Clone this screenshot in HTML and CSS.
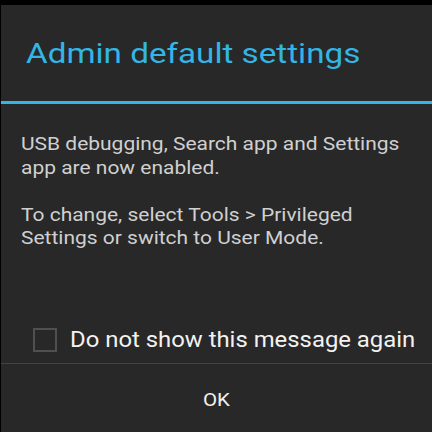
FILE: index.html
```html
<!DOCTYPE html>
<html>
<head>
<meta charset="utf-8">
<link rel="stylesheet" href="styles.css">
</head>
<body>
<div class="dialog">
  <div class="title"><span class="title-text">Admin default settings</span></div>
  <div class="rule"></div>
  <div class="body">
    <div class="body-inner">
      <p>USB debugging, Search app and Settings app are now enabled.</p>
      <p>To change, select Tools &gt; Privileged Settings or switch to User Mode.</p>
    </div>
  </div>
  <label class="check">
    <span class="box"></span>
    <span class="check-text">Do not show this message again</span>
  </label>
  <div class="divider"></div>
  <div class="button"><span class="button-text">OK</span></div>
</div>
</body>
</html>
```
FILE: styles.css
```css
html, body {
  margin: 0;
  padding: 0;
  background: #000;
  width: 432px;
  height: 432px;
  overflow: hidden;
}
body {
  padding: 5px 0 0 1px;
  box-sizing: border-box;
  font-family: Roboto, "Noto Sans", sans-serif;
}
.dialog {
  background: #282828;
  height: 427px;
  display: flex;
  flex-direction: column;
}
.title {
  color: #33b5e5;
  font-size: 28px;
  line-height: 32px;
  padding: 33px 0 0 25px;
  height: 65px;
  box-sizing: border-box;
}
.title-text {
  display: inline-block;
  transform: scaleX(1.186);
  transform-origin: left center;
  white-space: nowrap;
}
.rule {
  height: 3px;
  background: #33b5e5;
  margin-top: 31px;
}
.body {
  color: #d0d0d0;
  font-size: 19px;
  line-height: 23.5px;
  padding: 28px 0 0 20px;
  height: 212px;
  box-sizing: border-box;
}
.body-inner {
  width: 350px;
  transform: scaleX(1.104);
  transform-origin: left top;
}
.body p {
  margin: 0 0 23.5px 0;
}
.check {
  display: flex;
  align-items: center;
  padding-left: 32px;
  height: 47px;
}
.box {
  width: 20px;
  height: 20px;
  border: 2px solid #505050;
  box-sizing: content-box;
  margin-right: 13px;
}
.check-text {
  color: #f2f2f2;
  font-size: 22px;
  display: inline-block;
  transform: scaleX(1.085);
  transform-origin: left center;
  white-space: nowrap;
}
.divider {
  height: 1px;
  background: #444;
}
.button {
  flex: 1;
  display: flex;
  align-items: center;
  justify-content: center;
  color: #f0f0f0;
  font-size: 19px;
  padding-top: 2px;
}
.button-text {
  display: inline-block;
  transform: scaleX(1.08);
}
```
